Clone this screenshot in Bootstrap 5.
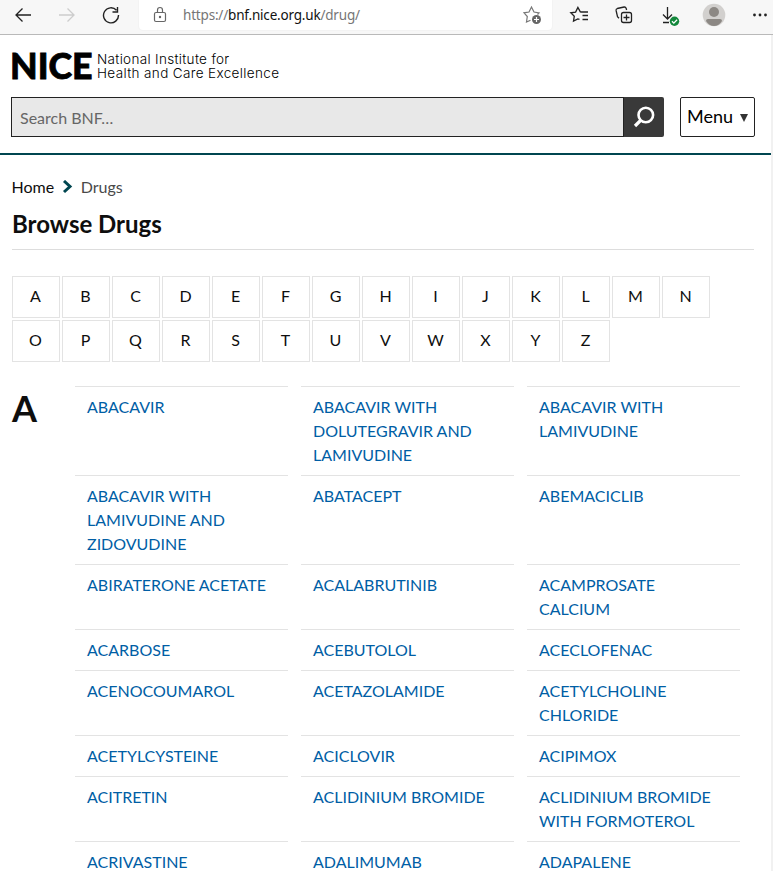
<!DOCTYPE html>
<html lang="en">
<head>
<meta charset="utf-8">
<title>Browse Drugs | BNF</title>
<link href="https://cdn.jsdelivr.net/npm/bootstrap@5.3.0/dist/css/bootstrap.min.css" rel="stylesheet">
<style>
body{font-family:Lato,sans-serif;font-size:16px;line-height:24px;color:#0e0e0e;height:871px;overflow:hidden;background:#fff}
svg{display:block;flex:none}
.chrome{height:35px;background:#f7f7f7;border-bottom:1px solid #b9b9b9}
.chrome-nav{width:139px;height:30px;padding-left:14px;gap:26px}
.address{width:413px;height:30px;border-radius:0 0 4px 4px;padding:0 10px 0 14px;box-shadow:0 0 2px #0001}
.url{font:13.500px/30px "Noto Sans",sans-serif;color:#767676;margin-left:16px;letter-spacing:-.19px}
.url b{font-weight:400;color:#111}
.site{height:836px;margin-right:2px;box-shadow:2px 0 #f1f1f1;overflow:hidden}
.masthead{height:120px;border-bottom:2px solid #004650;padding:17px 16px 0 11px}
.brand{height:30px}
.tagline{font:300 13.500px/14px Inter,sans-serif;color:#000;padding-left:1px;letter-spacing:.36px}
.tagline .line-1{letter-spacing:.32px}
.searchbar{margin-top:15px;height:40px}
.field{background:#e8e8e8;border:1px solid #222;color:#666;padding:0 8px;line-height:39px}
.go{width:40px;background:#393939;border-radius:0 2px 2px 0}
.menu-btn{width:75px;height:40px;border:1px solid #222;border-radius:2px;margin-left:16px;padding:0 6px 2px;font-size:18px;line-height:36px;color:#000;background:#fff}
.content-area{padding:20px 17px 0 12px}
.crumbs{gap:8px;height:24px}
.crumbs span{margin-left:-.5px}
.here{color:#494949}
h1{font-size:24px;line-height:30px;font-weight:700;height:41px;margin:10px 0 26px;border-bottom:1px solid #ddd}
.letters{gap:2px;height:86px}
.letters a{width:48px;height:42px;border:1px solid #e3e3e3;color:#0e0e0e;line-height:38px;padding-right:1px}
.group{margin-top:24px}
h2{width:63px;font-size:36px;font-weight:700;line-height:44px;margin:0}
.drugs{display:grid;grid-template-columns:repeat(3,213px);column-gap:13px}
.drugs a{border-top:1px solid #e3e3e3;padding:8px 12px;color:#005ea5}
</style>
</head>
<body>
<div class="chrome d-flex">
  <div class="chrome-nav d-flex align-items-center">
    <svg width="18" height="16" fill="none" stroke="#222" stroke-width="1.3"><path d="M17 8H2M8.5 1.5 2 8l6.500 6.500"/></svg>
    <svg width="18" height="16" fill="none" stroke="#cdcdcd" stroke-width="1.300"><path d="M1 8h15M9.500 1.500 16 8l-6.500 6.500"/></svg>
    <svg width="18" height="18" fill="none" stroke="#222" stroke-width="1.4"><path d="M14.500 4.200A7.500 7.500 0 1 0 16.500 9M15.500 1v5h-5"/></svg>
  </div>
  <div class="address bg-white d-flex align-items-center">
    <svg width="14" height="18" fill="none" stroke="#666" stroke-width="1.200"><rect x="1.500" y="6.500" width="11" height="9" rx="1.500"/><path d="M4.500 6.500V4a2.500 2.500 0 0 1 5 0v2.500"/><circle cx="7" cy="11" r=".6" fill="#666"/></svg>
    <div class="url">https://<b>bnf.nice.org.uk</b>/drug/</div>
    <svg class="ms-auto" width="19" height="20" fill="none" stroke="#777" stroke-width="1.200"><path d="M7.500 15.200 3.500 17l.8-5.500L1 7.800l5-.8L8.500 2l2.500 5 5 .8-1.500 1.700"/><circle cx="13.500" cy="14.500" r="4.500" fill="#666" stroke="none"/><path d="M11 14.500h5M13.500 12v5" stroke="#fff"/></svg>
  </div>
  <div class="flex-grow-1">
    <svg width="221" height="34" fill="none" stroke="#222" stroke-width="1.300">
      <path d="M29 12h7M30.500 15.500H36M30.500 19.500H36M29.500 12l-1.200-.2-2.400-4.300-2.300 4.600-4.800.7 3.500 3.400-.8 4.900 4.300-2.200 1.700.5"/>
      <rect x="69.500" y="12.500" width="10" height="10" rx="2"/><path d="M74.500 14.500v6M71.500 17.500h6M67 18.300l-1.500-1.600-1.400-6.200q-.3-1.500 1.200-2l6.800-1.500q1.500-.2 2 1.200l.5 1.800"/>
      <path d="M115.500 7v12M111 14.500l4.500 4.500 4.500-4.500M111 22.500h6"/>
      <circle cx="122.500" cy="21.300" r="4.700" fill="#13883c" stroke="none"/><path d="m120 21.300 1.800 1.800 3.300-3.400" stroke="#fff"/>
      <g stroke="none"><circle cx="162" cy="15" r="11.300" fill="#d2d0ce"/><circle cx="162" cy="12" r="5" fill="#8c8884"/><path d="M154 21q0-2 2-2h12q2 0 2 2-3 5-8 5t-8-5" fill="#8c8884"/>
      <g fill="#222"><circle cx="202.500" cy="15" r="1.400"/><circle cx="208" cy="15" r="1.400"/><circle cx="213.500" cy="15" r="1.400"/></g></g>
    </svg>
  </div>
</div>
<main class="site">
  <header class="masthead">
    <div class="brand d-flex">
      <svg width="85" height="30" overflow="visible"><text x="-1" y="27" font-family="Lato, sans-serif" font-weight="900" font-size="36" textLength="82.500" lengthAdjust="spacingAndGlyphs" stroke="#000" stroke-width=".8">NICE</text></svg>
      <div class="tagline text-nowrap"><div class="line-1">National Institute for</div><div>Health and Care Excellence</div></div>
    </div>
    <div class="searchbar d-flex">
      <div class="field flex-grow-1">Search BNF…</div>
      <div class="go d-flex align-items-center justify-content-center"><svg width="22" height="22" fill="none" stroke="#fff" stroke-width="2.600"><circle cx="12.800" cy="9" r="7.300"/><path d="m8 14-6 6" stroke-width="3.200"/></svg></div>
      <button class="menu-btn d-flex align-items-center justify-content-between">Menu<svg class="mt-1" width="8" height="8"><path d="M0 0h8L4 8" fill="#333"/></svg></button>
    </div>
  </header>
  <div class="content-area">
    <nav class="crumbs d-flex align-items-center"><span>Home</span><svg width="11" height="14" fill="none" stroke="#004650" stroke-width="3"><path d="m2 1 6 5.500L2 12"/></svg><span class="here">Drugs</span></nav>
    <h1>Browse Drugs</h1>
    <nav class="letters d-flex flex-wrap text-center" id="letters"></nav>
    <section class="group d-flex"><h2>A</h2><div class="drugs" id="drugs"></div></section>
  </div>
</main>
<script src="https://cdn.jsdelivr.net/npm/bootstrap@5.3.0/dist/js/bootstrap.bundle.min.js"></script>
<script>
const link = t => `<a class="text-decoration-none">${t}</a>`;
document.getElementById('letters').innerHTML = [...'ABCDEFGHIJKLMNOPQRSTUVWXYZ'].map(link).join('');
document.getElementById('drugs').innerHTML = ['ABACAVIR','ABACAVIR WITH DOLUTEGRAVIR AND LAMIVUDINE','ABACAVIR WITH LAMIVUDINE','ABACAVIR WITH LAMIVUDINE AND ZIDOVUDINE','ABATACEPT','ABEMACICLIB','ABIRATERONE ACETATE','ACALABRUTINIB','ACAMPROSATE CALCIUM','ACARBOSE','ACEBUTOLOL','ACECLOFENAC','ACENOCOUMAROL','ACETAZOLAMIDE','ACETYLCHOLINE CHLORIDE','ACETYLCYSTEINE','ACICLOVIR','ACIPIMOX','ACITRETIN','ACLIDINIUM BROMIDE','ACLIDINIUM BROMIDE WITH FORMOTEROL','ACRIVASTINE','ADALIMUMAB','ADAPALENE'].map(link).join('');
</script>
</body>
</html>
